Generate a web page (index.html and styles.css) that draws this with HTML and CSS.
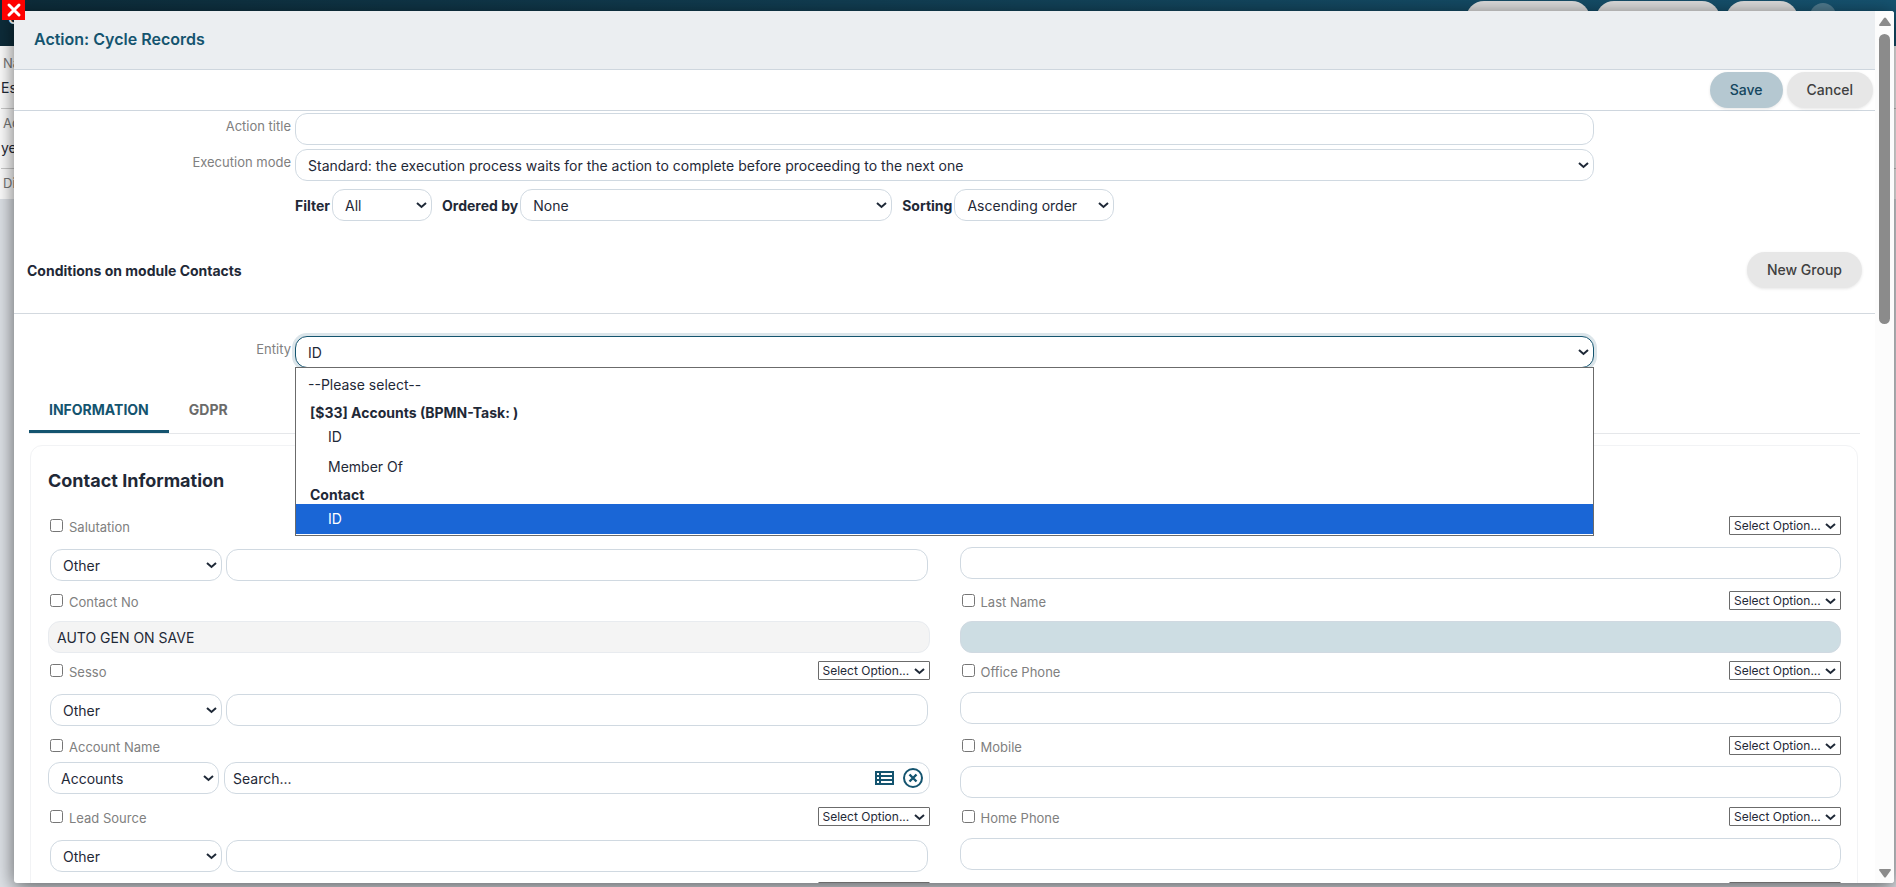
FILE: index.html
```html
<!DOCTYPE html>
<html lang="en">
<head>
    <meta charset="UTF-8">
    <meta name="viewport" content="width=device-width, initial-scale=1.0">
    <title>Action: Cycle Records</title>
    <link rel="stylesheet" href="styles.css">
</head>
<body>
    <!-- Page behind the popup -->
    <div class="page">
        <div class="navbar">
            <span class="brand">S</span>
            <span class="nav-pill wide"></span>
            <span class="nav-pill wide"></span>
            <span class="nav-pill"></span>
            <span class="nav-avatar"></span>
        </div>
        <div class="page-fields">
            <div class="page-label">Name</div>
            <div class="page-value">Esempio</div>
            <div class="page-label">Active</div>
            <div class="page-value">yes</div>
            <div class="page-label">Diagram</div>
        </div>
    </div>

    <!-- Popup -->
    <div class="modal">
        <div class="modal-body">
            <h1 class="modal-title">Action: Cycle Records</h1>

            <div class="toolbar">
                <button type="button" class="btn btn-save">Save</button>
                <button type="button" class="btn">Cancel</button>
            </div>

            <form class="settings">
                <div class="form-row">
                    <label for="title">Action title</label>
                    <input type="text" id="title" class="control">
                </div>
                <div class="form-row">
                    <label for="mode">Execution mode</label>
                    <select id="mode" class="control">
                        <option>Standard: the execution process waits for the action to complete before proceeding to the next one</option>
                    </select>
                </div>
                <div class="filter-row">
                    <label for="filter">Filter</label>
                    <select id="filter" class="control filter-select"><option>All</option></select>
                    <label for="order">Ordered by</label>
                    <select id="order" class="control order-select"><option>None</option></select>
                    <label for="sorting">Sorting</label>
                    <select id="sorting" class="control sorting-select"><option>Ascending order</option></select>
                </div>
            </form>

            <div class="conditions">
                <h2>Conditions on module Contacts</h2>
                <button type="button" class="btn">New Group</button>
            </div>

            <div class="form-row entity-row">
                <label for="entity">Entity</label>
                <div class="entity">
                    <select id="entity" class="control focused"><option>ID</option></select>
                    <ul class="dropdown" role="listbox" aria-label="Entity">
                        <li class="option" role="option">--Please select--</li>
                        <li class="group">[$33] Accounts (BPMN-Task: )</li>
                        <li class="option nested" role="option">ID</li>
                        <li class="option nested" role="option">Member Of</li>
                        <li class="group">Contact</li>
                        <li class="option nested selected" role="option" aria-selected="true">ID</li>
                    </ul>
                </div>
            </div>

            <div class="tabs">
                <a href="#information" class="tab active">INFORMATION</a>
                <a href="#gdpr" class="tab">GDPR</a>
            </div>

            <div class="card" id="information">
                <h3>Contact Information</h3>
                <div class="fields">
                    <div class="field tall">
                        <div class="field-head">
                            <input type="checkbox" id="c-salutation"><label for="c-salutation">Salutation</label>
                            <select class="mini" aria-label="Salutation option"><option>Select Option...</option></select>
                        </div>
                        <div class="picker">
                            <select class="control" aria-label="Salutation"><option>Other</option></select>
                            <input type="text" class="control" aria-label="Salutation value">
                        </div>
                    </div>
                    <div class="field tall">
                        <div class="field-head">
                            <input type="checkbox" id="c-first"><label for="c-first">First Name</label>
                            <select class="mini" aria-label="First Name option"><option>Select Option...</option></select>
                        </div>
                        <input type="text" class="control" aria-label="First Name">
                    </div>

                    <div class="field">
                        <div class="field-head">
                            <input type="checkbox" id="c-no"><label for="c-no">Contact No</label>
                        </div>
                        <input type="text" class="control readonly" aria-label="Contact No" value="AUTO GEN ON SAVE" readonly>
                    </div>
                    <div class="field">
                        <div class="field-head">
                            <input type="checkbox" id="c-last"><label for="c-last">Last Name</label>
                            <select class="mini" aria-label="Last Name option"><option>Select Option...</option></select>
                        </div>
                        <input type="text" class="control required" aria-label="Last Name">
                    </div>

                    <div class="field tall">
                        <div class="field-head">
                            <input type="checkbox" id="c-sesso"><label for="c-sesso">Sesso</label>
                            <select class="mini" aria-label="Sesso option"><option>Select Option...</option></select>
                        </div>
                        <div class="picker">
                            <select class="control" aria-label="Sesso"><option>Other</option></select>
                            <input type="text" class="control" aria-label="Sesso value">
                        </div>
                    </div>
                    <div class="field tall">
                        <div class="field-head">
                            <input type="checkbox" id="c-office"><label for="c-office">Office Phone</label>
                            <select class="mini" aria-label="Office Phone option"><option>Select Option...</option></select>
                        </div>
                        <input type="text" class="control" aria-label="Office Phone">
                    </div>

                    <div class="field compact">
                        <div class="field-head">
                            <input type="checkbox" id="c-account"><label for="c-account">Account Name</label>
                        </div>
                        <div class="lookup">
                            <select class="control" aria-label="Account module"><option>Accounts</option></select>
                            <div class="control search">
                                <input type="text" aria-label="Account Name" value="Search...">
                                <button type="button" class="icon-btn" aria-label="List">
                                    <svg width="20" height="16" viewBox="0 0 20 16"><path fill="#14546f" d="M0 1h19v14H0z"/><path fill="#fff" d="M2 3h2v2H2zM6 3h11v2H6zM2 7h2v2H2zM6 7h11v2H6zM2 11h2v2H2zM6 11h11v2H6z"/></svg>
                                </button>
                                <button type="button" class="icon-btn" aria-label="Clear">
                                    <svg width="22" height="22" viewBox="0 0 22 22" fill="none" stroke="#14546f" stroke-width="2"><circle cx="11" cy="11" r="9"/><path stroke-width="2.4" d="M7.5 7.5l7 7M14.5 7.5l-7 7"/></svg>
                                </button>
                            </div>
                        </div>
                    </div>
                    <div class="field">
                        <div class="field-head">
                            <input type="checkbox" id="c-mobile"><label for="c-mobile">Mobile</label>
                            <select class="mini" aria-label="Mobile option"><option>Select Option...</option></select>
                        </div>
                        <input type="text" class="control" aria-label="Mobile">
                    </div>

                    <div class="field tall">
                        <div class="field-head">
                            <input type="checkbox" id="c-lead"><label for="c-lead">Lead Source</label>
                            <select class="mini" aria-label="Lead Source option"><option>Select Option...</option></select>
                        </div>
                        <div class="picker">
                            <select class="control" aria-label="Lead Source"><option>Other</option></select>
                            <input type="text" class="control" aria-label="Lead Source value">
                        </div>
                    </div>
                    <div class="field tall">
                        <div class="field-head">
                            <input type="checkbox" id="c-home"><label for="c-home">Home Phone</label>
                            <select class="mini" aria-label="Home Phone option"><option>Select Option...</option></select>
                        </div>
                        <input type="text" class="control" aria-label="Home Phone">
                    </div>

                    <div class="field">
                        <div class="field-head">
                            <select class="mini" aria-label="Left option"><option>Select Option...</option></select>
                        </div>
                    </div>
                    <div class="field">
                        <div class="field-head">
                            <select class="mini" aria-label="Right option"><option>Select Option...</option></select>
                        </div>
                    </div>
                </div>
            </div>
        </div>

        <div class="scrollbar">
            <svg width="14" height="10" viewBox="0 0 14 10"><path fill="#8b8b8b" d="M6 1q1-1 2 0l5 7q0 1-1 1H2q-1 0-1-1z"/></svg>
            <div class="thumb"></div>
            <svg width="14" height="10" viewBox="0 0 14 10"><path fill="#8b8b8b" d="M6 9q1 1 2 0l5-7q0-1-1-1H2q-1 0-1 1z"/></svg>
        </div>
    </div>

    <button type="button" class="close" aria-label="Close">
        <svg width="16" height="16" viewBox="0 0 16 16" stroke="#fff" stroke-width="3" stroke-linecap="round"><path d="M3 3l10 10M13 3L3 13"/></svg>
    </button>
</body>
</html>
```

FILE: styles.css
```css
* {
    box-sizing: border-box;
}
body {
    margin: 0;
    height: 100vh;
    overflow: hidden;
    font-family: Inter, sans-serif;
    font-size: 14px;
    color: #1f2937;
    background-color: #dfe3e8;
}
h1, h2, h3, ul {
    margin: 0;
    padding: 0;
}
input, select, button {
    font: inherit;
    color: inherit;
}
select {
    appearance: none;
    background: #fff url("data:image/svg+xml,%3Csvg xmlns='http://www.w3.org/2000/svg' width='11' height='8' viewBox='0 0 11 8'%3E%3Cpath d='M1 2l4.500 4L10 2' fill='none' stroke='%231f2937' stroke-width='2'/%3E%3C/svg%3E") no-repeat right 4px center;
}

/* page behind the popup */
.navbar {
    display: flex;
    justify-content: flex-end;
    height: 46px;
    padding: 1px 60px 0 8px;
    background: linear-gradient(90deg, #0d2c3a, #165370);
}
.brand {
    margin-right: auto;
    color: #fff;
    font-size: 20px;
    line-height: 32px;
}
.nav-pill {
    width: 72px;
    height: 36px;
    margin-right: 6px;
    border-radius: 18px;
    background-color: #dcdcdc;
}
.nav-pill.wide {
    width: 124px;
}
.nav-avatar {
    width: 26px;
    height: 26px;
    margin: 2px 0 0 6px;
    border-radius: 50%;
    background-color: #4f7a8e;
}
.page-fields {
    height: 153px;
    padding: 7px 0 0 1px;
    background-color: #fff;
}
.page-label {
    height: 20px;
    padding-left: 2px;
    font-size: 13px;
    line-height: 20px;
    color: #777;
}
.page-value {
    height: 36px;
    margin-bottom: 4px;
    line-height: 30px;
    border-bottom: 1px solid #ccc;
}

/* popup */
.modal {
    position: absolute;
    top: 11px;
    right: 2px;
    bottom: 4px;
    left: 14px;
    display: flex;
    overflow: hidden;
    border-radius: 3px;
    background-color: #fff;
    box-shadow: 0 4px 20px rgba(0, 0, 0, 0.6);
}
.modal-body {
    flex: 1;
    overflow: hidden;
}
.modal-title {
    height: 59px;
    padding-left: 20px;
    font-size: 16px;
    font-weight: 600;
    line-height: 57px;
    color: #14546f;
    background-color: #ebeef1;
    border-bottom: 1px solid #ced6de;
}
.toolbar {
    display: flex;
    justify-content: flex-end;
    gap: 4px;
    height: 41px;
    padding: 2px 2px 0;
    border-bottom: 1px solid #ced6de;
}
.btn {
    height: 36px;
    padding: 0 20px 1px;
    font-weight: 500;
    color: #404040;
    background-color: #e7e7e7;
    border: none;
    border-radius: 18px;
    box-shadow: 0 1px 3px rgba(0, 0, 0, 0.1);
}
.btn-save {
    color: #14465e;
    background-color: #b5c8d1;
}
.control {
    width: 100%;
    height: 32px;
    padding: 4px 8px;
    background-color: #fff;
    border: 1px solid #d0d9e1;
    border-radius: 12px;
}
select.control {
    padding: 4px 12px;
}
.settings {
    padding-top: 2px;
}
.form-row {
    display: grid;
    grid-template-columns: 277px 1fr 277px;
    column-gap: 4px;
    margin-bottom: 4px;
}
.form-row > label {
    font-size: 13px;
    line-height: 26px;
    text-align: right;
    color: #808080;
}
.filter-row {
    display: flex;
    align-items: center;
    gap: 2px;
    padding: 4px 0 0 281px;
    font-weight: 700;
}
.filter-row .control {
    margin-right: 8px;
    font-weight: 400;
}
.filter-row .filter-select {
    width: 100px;
}
.filter-row .order-select {
    width: 372px;
}
.filter-row .sorting-select {
    width: 160px;
}
.conditions {
    display: flex;
    align-items: center;
    justify-content: space-between;
    height: 93px;
    padding: 6px 13px 0;
    border-bottom: 1px solid #d3d9df;
}
.conditions h2 {
    font-size: 14px;
    font-weight: 700;
}

/* entity select with its open list */
.entity-row {
    margin: 22px 0 0;
}
.entity {
    position: relative;
}
.control.focused {
    border-color: #14546f;
    box-shadow: 0 0 0 3px #dbe5ea;
}
.dropdown {
    position: absolute;
    top: 31px;
    left: 0;
    right: 0;
    z-index: 2;
    padding: 2px 0 1px;
    list-style: none;
    background-color: #fff;
    border: 1px solid #6b6b6b;
}
.option {
    height: 30px;
    padding-left: 12px;
    line-height: 30px;
}
.option.nested {
    padding-left: 32px;
}
.option.selected {
    color: #fff;
    background-color: #1a66d6;
}
.group {
    height: 22px;
    padding-left: 14px;
    font-weight: 700;
    line-height: 25px;
}

.tabs {
    display: flex;
    margin: 18px 15px 0;
    border-bottom: 1px solid #e5e7ea;
}
.tab {
    height: 47px;
    padding: 0 20px;
    font-weight: 700;
    line-height: 47px;
    color: #6b6b6b;
    text-decoration: none;
}
.tab.active {
    color: #14546f;
    border-bottom: 3px solid #14546f;
}
.card {
    margin: 11px 17px 0 16px;
    padding: 21px 16px 21px 17px;
    border: 1px solid #f2f3f5;
    border-radius: 12px;
}
.card h3 {
    font-size: 18px;
    font-weight: 700;
    line-height: 28px;
}
.fields {
    display: grid;
    grid-template-columns: 1fr 1fr;
    column-gap: 30px;
    margin-top: 21px;
}
.field {
    height: 70px;
}
.field.tall {
    height: 75px;
}
.field-head {
    display: flex;
    align-items: center;
    height: 19px;
    margin-bottom: 11px;
    font-size: 13px;
    color: #808080;
}
.field.tall .field-head {
    margin-bottom: 12px;
}
.field.compact {
    height: 71px;
}
.field.compact .field-head {
    margin-bottom: 7px;
}
.field-head input {
    width: 13px;
    height: 13px;
    margin: 0 6px 0 2px;
}
.field-head label {
    padding-top: 3px;
}
.mini {
    width: 112px;
    height: 19px;
    margin-left: auto;
    padding: 0 4px;
    font-size: 12px;
    color: #1f2937;
    border: 1px solid #6b6b6b;
    border-radius: 1px;
}
.picker {
    display: flex;
    gap: 4px;
    padding: 2px;
}
.picker select {
    width: 172px;
}
.picker input {
    flex: 1;
}
.readonly {
    background-color: #f4f4f4;
    border-color: #e8ebef;
}
.required {
    background-color: #cddde3;
}
.lookup {
    display: flex;
    gap: 5px;
}
.lookup select {
    width: 171px;
}
.search {
    display: flex;
    flex: 1;
    align-items: center;
    gap: 7px;
    padding-right: 5px;
}
.search input {
    flex: 1;
    padding: 0;
    border: none;
    outline: none;
}
.icon-btn {
    display: flex;
    padding: 0;
    background: none;
    border: none;
}

.scrollbar {
    display: flex;
    flex-direction: column;
    align-items: center;
    width: 19px;
    padding: 6px 0 5px;
    background-color: #fcfcfc;
}
.thumb {
    width: 11px;
    height: 290px;
    margin: 7px 0 auto;
    border-radius: 6px;
    background-color: #8b8b8b;
}
.close {
    position: absolute;
    top: 0;
    left: 2px;
    display: flex;
    justify-content: center;
    align-items: center;
    width: 23px;
    height: 20px;
    padding: 0;
    background-color: #f00;
    border: none;
}
```
